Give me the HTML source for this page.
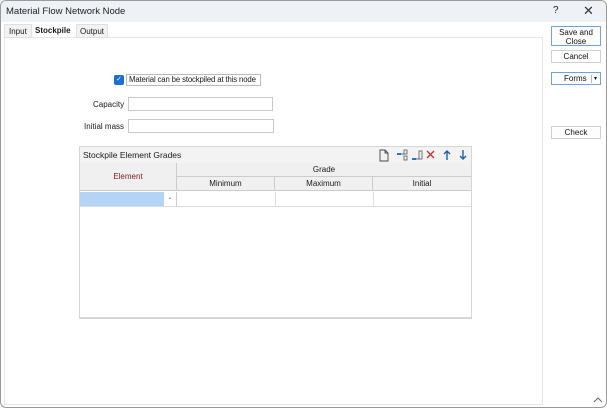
<!DOCTYPE html>
<html><head><style>
*{box-sizing:border-box;margin:0;padding:0}
body{width:607px;height:408px;overflow:hidden;background:#fff;font-family:"Liberation Sans",sans-serif;font-size:8px;color:#1a1a1a;position:relative;white-space:nowrap}
.a{position:absolute}
.btn{position:absolute;background:#fdfdfd;border:1px solid #d0d0d0;text-align:center;font-size:8px;color:#111}
.in{position:absolute;border:1px solid #c8c8c8;background:#fff;height:14px}
</style></head><body>
<div class="a" style="left:0;top:0;width:607px;height:408px;border:1px solid #9a9a9a;border-radius:6px"></div>
<div class="a" style="left:1px;top:1px;width:605px;height:21px;background:#eef2f7;border-radius:5px 5px 0 0"></div>
<div class="a" style="left:6px;top:6px;font-size:9.5px;color:#222">Material Flow Network Node</div>
<div class="a" style="left:553px;top:5px;font-size:10px">?</div>
<div class="a" style="left:583px;top:3px;font-size:13px;color:#333">✕</div>
<div class="a" style="left:4px;top:37px;width:539px;height:368px;border:1px solid #e6e6e6"></div>
<div class="a" style="left:4px;top:24px;width:28px;height:14px;background:#f3f3f3;border:1px solid #e0e0e0"></div>
<div class="a" style="left:9px;top:27px">Input</div>
<div class="a" style="left:35px;top:26px;font-weight:bold">Stockpile</div>
<div class="a" style="left:76px;top:24px;width:32px;height:14px;background:#f3f3f3;border:1px solid #e0e0e0"></div>
<div class="a" style="left:80px;top:27px">Output</div>
<div class="a" style="left:114px;top:75px;width:10px;height:10px;background:#1a6fd1;border-radius:2px;color:#fff;font-size:7px;line-height:10px;text-align:center">✓</div>
<div class="a" style="left:126px;top:74px;width:135px;height:12px;border:1px solid #bbb;padding-left:2px;line-height:10px;overflow:hidden;font-size:7.8px;letter-spacing:-0.15px">Material can be stockpiled at this node</div>
<div class="a" style="left:93px;top:100px">Capacity</div>
<div class="in" style="left:128px;top:97px;width:145px"></div>
<div class="a" style="left:84px;top:122px">Initial mass</div>
<div class="in" style="left:128px;top:119px;width:146px"></div>
<div class="a" style="left:79px;top:146px;width:393px;height:173px;border:1px solid #d6d6d6;border-bottom:2px solid #d6d6d6;background:#fff"></div>
<div class="a" style="left:80px;top:147px;width:391px;height:16px;background:#f3f3f3"></div>
<div class="a" style="left:83px;top:150px;font-size:8.5px">Stockpile Element Grades</div>
<svg class="a" style="left:376px;top:147px" width="95" height="16">
<path d="M4 3h5l3 3v8H4z M9 3v3h3" fill="none" stroke="#444" stroke-width="0.9"/>
<rect x="21" y="6" width="4" height="2" fill="#3070c0"/><path d="M25 7h3" stroke="#3070c0"/><rect x="28" y="3" width="3" height="4" fill="none" stroke="#555" stroke-width="0.8"/><rect x="28" y="9" width="3" height="4" fill="none" stroke="#555" stroke-width="0.8"/>
<rect x="36" y="11" width="4" height="2" fill="#3070c0"/><path d="M40 12h3" stroke="#3070c0"/><rect x="43" y="4" width="3" height="8" fill="none" stroke="#555" stroke-width="0.8"/>
<path d="M51 4l7 7M58 4l-7 7" stroke="#d03030" stroke-width="1.4"/>
<path d="M71 13V4M68 7l3-3 3 3" fill="none" stroke="#1a5fb4" stroke-width="1.4"/>
<path d="M87 3v9M84 9l3 3 3-3" fill="none" stroke="#1a5fb4" stroke-width="1.4"/>
</svg>
<div class="a" style="left:80px;top:163px;width:97px;height:28px;background:#f0f0f0;border-right:1px solid #ccc;border-bottom:1px solid #ccc;color:#8b1a1a;text-align:center;line-height:28px">Element</div>
<div class="a" style="left:177px;top:163px;width:294px;height:14px;background:#f0f0f0;border-bottom:1px solid #ccc;text-align:center;line-height:14px">Grade</div>
<div class="a" style="left:177px;top:177px;width:98px;height:14px;background:#f0f0f0;border-right:1px solid #ccc;border-bottom:1px solid #ccc;text-align:center;line-height:14px">Minimum</div>
<div class="a" style="left:275px;top:177px;width:98px;height:14px;background:#f0f0f0;border-right:1px solid #ccc;border-bottom:1px solid #ccc;text-align:center;line-height:14px">Maximum</div>
<div class="a" style="left:373px;top:177px;width:98px;height:14px;background:#f0f0f0;border-bottom:1px solid #ccc;text-align:center;line-height:14px">Initial</div>
<div class="a" style="left:80px;top:192px;width:84px;height:14px;background:#b3d4f5"></div>
<div class="a" style="left:164px;top:192px;width:13px;height:14px;border-right:1px solid #ccc;text-align:center;font-size:5px;line-height:14px;color:#666">•</div>
<div class="a" style="left:80px;top:206px;width:391px;height:1px;background:#ddd"></div>
<div class="a" style="left:275px;top:192px;width:1px;height:14px;background:#ddd"></div>
<div class="a" style="left:373px;top:192px;width:1px;height:14px;background:#ddd"></div>
<div class="btn" style="left:551px;top:26px;width:50px;height:20px;border-color:#6fa3d9;line-height:9px;padding-top:1px">Save and<br>Close</div>
<div class="btn" style="left:551px;top:50px;width:50px;height:13px;line-height:12px">Cancel</div>
<div class="btn" style="left:551px;top:72px;width:50px;height:13px;border-color:#6fa3d9;line-height:12px;text-align:left;padding-left:12px">Forms<span style="position:absolute;left:39px;top:2px;height:8px;border-left:1px solid #bbb;padding-left:2px;font-size:6px;line-height:8px">▾</span></div>
<div class="btn" style="left:551px;top:126px;width:50px;height:13px;line-height:12px">Check</div>
<svg class="a" style="left:593px;top:396px" width="10" height="8"><path d="M1 6l4-4 4 4" fill="none" stroke="#666" stroke-width="1"/></svg>
</body></html>
